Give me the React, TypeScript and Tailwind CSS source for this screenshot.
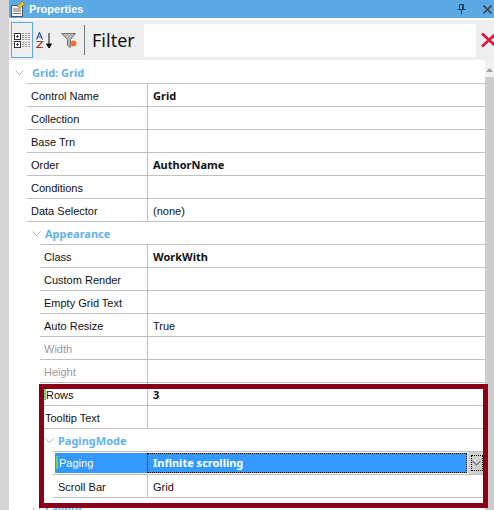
const BOLD = '[font-family:"Noto_Sans",sans-serif] font-bold';

function Chevron() {
  return (
    <svg width="9" height="6" viewBox="0 0 9 6" className="shrink-0">
      <path d="M0.5 0.5 L4.5 4.5 L8.5 0.5" fill="none" stroke="#b5b5b5" strokeWidth="1" />
    </svg>
  );
}

function Row({ indent, label, value, bold, muted, mark, labelPad = 4 }: { indent: number; label: string; value?: string; bold?: boolean; muted?: boolean; mark?: boolean; labelPad?: number }) {
  return (
    <div className="flex h-[23px] border-b border-[#c0c0c0]" style={{ marginLeft: indent }}>
      <div className="relative flex shrink-0 items-center border-r border-[#c0c0c0] pt-[2px]" style={{ width: 121 - indent, paddingLeft: labelPad }}>
        {mark && <span className="absolute left-[4px] top-[5px] h-[12px] w-[2px] bg-[#6fd26f]" />}
        <span className={muted ? "text-[#9a9a9a]" : "text-[#111]"}>{label}</span>
      </div>
      <div className={`flex items-center pl-[5px] pt-[2px] text-[#111] ${bold ? BOLD : ""}`}>{value}</div>
    </div>
  );
}

function Group({ left, label, lineLeft }: { left: number; label: string; lineLeft: number }) {
  return (
    <div>
      <div className="flex h-[22px] items-center pt-[2px]" style={{ paddingLeft: left }}>
        <Chevron />
        <span className={`ml-[4px] text-[#62b1ee] ${BOLD}`}>{label}</span>
      </div>
      <div className="h-[1px] bg-[#c0c0c0]" style={{ marginLeft: lineLeft }} />
    </div>
  );
}

export default function App() {
  return (
    <div className='relative flex h-[510px] w-[494px] overflow-hidden bg-white text-[11px] [font-family:"Liberation_Sans",sans-serif]'>
      <div className="w-[9px] shrink-0 bg-[#d6d4d6]" />
      <div className="flex min-w-0 flex-1 flex-col">
        <div className="flex h-[18px] shrink-0 items-center bg-[#5baae6] pl-[1px] pr-[1px]">
          <svg width="17" height="17" viewBox="0 0 17 17" className="shrink-0">
            <rect x="1.5" y="4.5" width="11" height="11" fill="#f4f4f4" stroke="#555" />
            <path d="M3 8h8M3 10h8M3 12.5h8" stroke="#777" strokeWidth="1" />
            <path d="M7 5 L12 0.5 L15 2.5 L10 7 Z" fill="#e8c23a" stroke="#8a6d1a" strokeWidth="0.6" />
          </svg>
          <span className="ml-[2px] text-[11px] font-bold text-white">Properties</span>
          <div className="flex-1" />
          <svg width="9" height="11" viewBox="0 0 9 11" className="mr-[17px] shrink-0">
            <path d="M2.5 0.5h4v5h-4zM0.5 5.5h8M4.5 5.5v5M5.5 1v4.5" fill="none" stroke="#2f3d4a" strokeWidth="1" />
          </svg>
          <svg width="9" height="9" viewBox="0 0 9 9" className="mr-[1px] shrink-0">
            <path d="M0.5 0.5L8.5 8.5M8.5 0.5L0.5 8.5" stroke="#3d4650" strokeWidth="1.6" />
          </svg>
        </div>
        <div className="mt-[2px] flex h-[40px] shrink-0 items-center bg-[#eeeeee] pl-[2px]">
          <div className="flex h-[36px] w-[22px] shrink-0 items-center justify-center border border-[#5ba6e6]">
            <svg width="17" height="16" viewBox="0 0 17 16">
              <rect x="0.5" y="1.5" width="6" height="6" fill="#fff" stroke="#333" />
              <path d="M2 4.5h3M3.5 3v3" stroke="#2a4fa0" />
              <rect x="0.5" y="9.5" width="6" height="6" fill="#fff" stroke="#333" />
              <path d="M2 12.5h3M3.5 11v3" stroke="#2a4fa0" />
              <path d="M8 1.5h9M8 3.5h9M8 5.5h9M8 7.5h9M8 10.5h9M8 12.5h9M8 14.5h9" stroke="#9a9a9a" strokeDasharray="2 1" />
            </svg>
          </div>
          <svg width="17" height="17" viewBox="0 0 17 17" className="ml-[3px] shrink-0">
            <path d="M0.5 7.5L3.5 0.5L6.5 7.5M1.8 5h3.4" fill="none" stroke="#2f55a5" strokeWidth="1.2" />
            <path d="M0.5 9.5h6L0.8 15.5h6" fill="none" stroke="#a33a3a" strokeWidth="1.2" />
            <path d="M13 1v13M10.5 12L13 16l2.5-4z" stroke="#111" fill="#111" />
          </svg>
          <svg width="16" height="15" viewBox="0 0 16 15" className="ml-[8px] shrink-0">
            <path d="M0.5 0.5h14l-5 6v8l-3-2v-6z" fill="#b5b5b5" stroke="#777" />
            <circle cx="12.5" cy="10.5" r="3" fill="#f0703a" />
          </svg>
          <div className="ml-[7px] h-[30px] w-[1px] shrink-0 bg-[#6f7a85]" />
          <span className='ml-[7px] w-[52px] shrink-0 text-[18px] leading-none text-[#111] [font-family:"Noto_Sans",sans-serif]'>Filter</span>
          <div className="h-[33px] w-[332px] shrink-0 bg-white" />
          <svg width="14" height="16" viewBox="0 0 14 16" className="ml-[5px] shrink-0">
            <path d="M1 1.5L15 14.5M15 1.5L1 14.5" stroke="#d8193c" strokeWidth="2.6" />
          </svg>
        </div>
        <div className="flex min-h-0 flex-1">
          <div className="min-w-0 flex-1">
            <div className="flex h-[23px] items-center pl-[6px] pt-[3px]">
              <Chevron />
              <span className={`ml-[8px] text-[#62b1ee] ${BOLD}`}>Grid: Grid</span>
            </div>
            <div className="ml-[18px] border-t border-[#c0c0c0]">
              <Row indent={0} label="Control Name" value="Grid" bold />
              <Row indent={0} label="Collection" />
              <Row indent={0} label="Base Trn" />
              <Row indent={0} label="Order" value="AuthorName" bold />
              <Row indent={0} label="Conditions" />
              <Row indent={0} label="Data Selector" value="(none)" />
              <Group left={5} label="Appearance" lineLeft={13} />
              <Row indent={13} label="Class" value="WorkWith" bold />
              <Row indent={13} label="Custom Render" />
              <Row indent={13} label="Empty Grid Text" />
              <Row indent={13} label="Auto Resize" value="True" />
              <Row indent={13} label="Width" muted />
              <Row indent={13} label="Height" muted />
              <Row indent={13} label="Rows" value="3" bold mark labelPad={6} />
              <Row indent={13} label="Tooltip Text" labelPad={5} />
              <Group left={18} label="PagingMode" lineLeft={26} />
              <div className="ml-[26px] flex h-[23px] border-b border-[#c0c0c0]">
                <div className="relative my-[1px] ml-[2px] flex w-[92px] shrink-0 items-center bg-[#3399ff] pl-[4px] pt-[1px] text-white">
                  <span className="absolute left-[1px] top-[3px] h-[13px] w-[2px] bg-[#6fd26f]" />
                  Paging
                </div>
                <div className={`my-[1px] flex flex-1 items-center border border-dotted border-black bg-[#3399ff] pl-[5px] text-white ${BOLD}`}>Infinite scrolling</div>
                <div className="ml-[1px] flex w-[17px] shrink-0 items-center justify-center bg-[#d0d0d0]">
                  <div className="flex h-[16px] w-[12px] items-center justify-center border border-dotted border-black">
                    <svg width="9" height="6" viewBox="0 0 9 6"><path d="M0.5 1L4.5 5L8.5 1" fill="none" stroke="#777" strokeWidth="1.2" /></svg>
                  </div>
                </div>
              </div>
              <Row indent={26} label="Scroll Bar" value="Grid" labelPad={5} />
              <div className="flex h-[23px] items-center pl-[5px]"><Chevron /><span className={`ml-[4px] text-[#62b1ee] ${BOLD}`}>Layout</span></div>
            </div>
          </div>
          <div className="flex w-[9px] shrink-0 flex-col bg-[#cdcdcd]">
            <div className="flex h-[17px] items-center justify-center bg-[#f0f0f0] pt-[2px]">
              <svg width="7" height="4" viewBox="0 0 7 4"><path d="M0 4L3.5 0L7 4z" fill="#a0a0a0" /></svg>
            </div>
          </div>
        </div>
      </div>
      <div className="absolute left-[39px] top-[384px] h-[124px] w-[449px] border-[5px] border-[#8a0018]" />
    </div>
  );
}
